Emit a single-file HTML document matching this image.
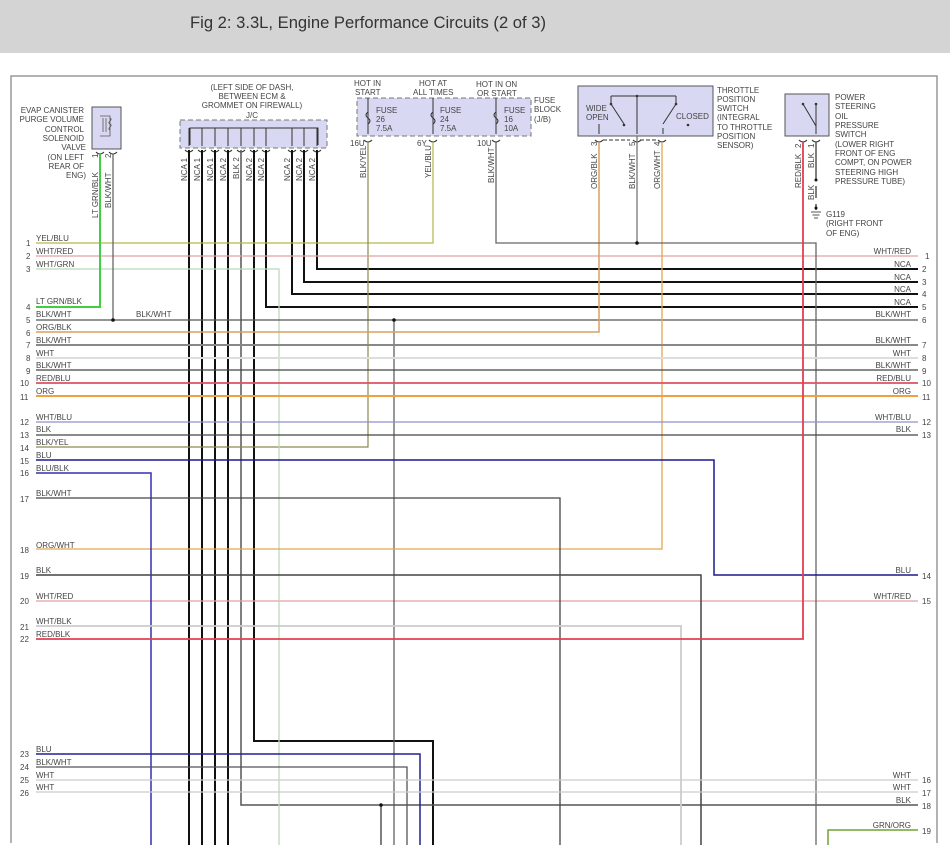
<!DOCTYPE html>
<html><head><meta charset="utf-8"><style>
html,body{margin:0;padding:0;background:#fff;}
.hd{position:absolute;left:0;top:0;width:950px;height:53px;background:#d4d4d4;}
.hd span{position:absolute;left:190px;top:13px;font:16.6px "Liberation Sans",sans-serif;color:#333;}
svg{position:absolute;left:0;top:0;}
text{font-family:"Liberation Sans",sans-serif;font-size:8px;fill:#444;}
</style></head><body>
<div class="hd"><span>Fig 2: 3.3L, Engine Performance Circuits (2 of 3)</span></div>
<svg width="950" height="862" viewBox="0 0 950 862">
<path d="M11 843 V76 H937 V843" fill="none" stroke="#999" stroke-width="1.5"/>

<rect x="92" y="107" width="29" height="42" fill="#d8d8f2" stroke="#555"/>
<path d="M100 116h10v20h-10 M103 118v14 M106 118v14 M110 118c4 2-4 4 0 6c4 2-4 4 0 6" fill="none" stroke="#555" stroke-width="0.8"/>
<rect x="180" y="120" width="147" height="28" fill="#d8d8f2" stroke="#777" stroke-dasharray="5,3"/>
<path d="M190 145V128H318V145" fill="none" stroke="#333"/>
<rect x="357" y="98" width="174" height="38" fill="#d8d8f2" stroke="#777" stroke-dasharray="5,3"/>
<rect x="578" y="86" width="135" height="50" fill="#d8d8f2" stroke="#555"/>
<rect x="785" y="94" width="44" height="42" fill="#d8d8f2" stroke="#555"/>

<g stroke="#333" stroke-width="1" fill="none">
<path d="M189 128V146M202 128V146M215 128V146M228 128V146M241 128V146M254 128V146M266 128V146M292 128V146M304 128V146M317 128V146"/>
<path d="M185 150q4 4 8 0M198 150q4 4 8 0M211 150q4 4 8 0M224 150q4 4 8 0M237 150q4 4 8 0M250 150q4 4 8 0M262 150q4 4 8 0M288 150q4 4 8 0M300 150q4 4 8 0M313 150q4 4 8 0"/>
<path d="M96 152q4 4 8 0M109 152q4 4 8 0M364 140q4 4 8 0M429 140q4 4 8 0M492 140q4 4 8 0M595 140q4 4 8 0M633 140q4 4 8 0M658 140q4 4 8 0M799 140q4 4 8 0M812 140q4 4 8 0"/>
<path d="M368 98V134M433 98V134M496 98V134" />
<path d="M368 112q-4 3 0 6q4 3 0 6M433 112q-4 3 0 6q4 3 0 6M496 112q-4 3 0 6q4 3 0 6" stroke-width="1"/>
<path d="M603 140H630M640 140H656" stroke-dasharray="4,2"/>
<path d="M611 96H676M637 96V134M611 96V104L624 124M676 96V104L663 124M599 124V134M663 128V134"/>
<path d="M803 104L816 126V134M816 104V134"/>
</g>
<g fill="#333"><circle cx="637" cy="96" r="1.3"/><circle cx="611" cy="104" r="1.3"/><circle cx="676" cy="104" r="1.3"/><circle cx="624" cy="125" r="1.3"/><circle cx="688" cy="125" r="1.3"/><circle cx="803" cy="104" r="1.3"/><circle cx="816" cy="104" r="1.3"/></g>

<g fill="none">
<g stroke="#111" stroke-width="2">
<path d="M189 150V845M202 150V845M215 150V845M228 150V845"/>
<path d="M317 150V269H918M304 150V282H918M292 150V294H918M266 150V307H918"/>
<path d="M254 150V741H433V845"/>
</g>
<path d="M241 150V805H918" stroke="#555" stroke-width="1.5"/>
<path d="M381 805V845" stroke="#555" stroke-width="1.5"/>
<path d="M36 243H433V142" stroke="#b8b84a" stroke-width="1.2"/>
<path d="M368 142V447H36" stroke="#8a8a50" stroke-width="1.2"/>
<path d="M36 256H918M36 601H918" stroke="#e0a0a0" stroke-width="1.2"/>
<path d="M36 269H279V845" stroke="#bcd8bc" stroke-width="1.3"/>
<path d="M36 307H100V154" stroke="#44cc44" stroke-width="2"/>
<path d="M113 154V320" stroke="#666" stroke-width="1.3"/>
<path d="M36 320H918M394 320V845" stroke="#555" stroke-width="1.2"/>
<path d="M36 332H599V142" stroke="#d9a060" stroke-width="1.5"/>
<path d="M662 142V549H36" stroke="#e0a850" stroke-width="1.3"/>
<path d="M496 142V243H816V845" stroke="#666" stroke-width="1.3"/>
<path d="M637 136V243" stroke="#777" stroke-width="1.3"/>
<path d="M36 345H918" stroke="#888" stroke-width="2"/>
<path d="M36 358H918" stroke="#ddd" stroke-width="2"/>
<path d="M36 370H918" stroke="#444" stroke-width="1.2"/>
<path d="M36 383H918" stroke="#e05060" stroke-width="1.8"/>
<path d="M36 396H918" stroke="#f0a040" stroke-width="2"/>
<path d="M36 422H918" stroke="#9090c8" stroke-width="1.2"/>
<path d="M36 435H918" stroke="#444" stroke-width="1.3"/>
<path d="M36 460H714V575H918" stroke="#1a1a90" stroke-width="1.5"/>
<path d="M36 473H151V845" stroke="#3030b0" stroke-width="1.5"/>
<path d="M36 498H560V845" stroke="#444" stroke-width="1.3"/>
<path d="M36 575H701V845" stroke="#444" stroke-width="1.5"/>
<path d="M36 626H681V845" stroke="#ccc" stroke-width="1.8"/>
<path d="M36 639H803V142" stroke="#e04050" stroke-width="1.8"/>
<path d="M36 754H420V845" stroke="#202090" stroke-width="1.5"/>
<path d="M36 767H407V845" stroke="#555" stroke-width="1.3"/>
<path d="M36 780H918M36 792H918" stroke="#ccc" stroke-width="1.3"/>
<path d="M828 845V830H918" stroke="#70a030" stroke-width="1.5"/>
<path d="M816 142V180M816 186V198M816 204V210" stroke="#555" stroke-width="1.5"/>
<path d="M811 212H821M812.5 215H819.5M814 218H818" stroke="#555"/>
</g>
<g fill="#111"><circle cx="113" cy="320" r="1.8"/><circle cx="394" cy="320" r="1.8"/><circle cx="637" cy="243" r="1.8"/><circle cx="381" cy="805" r="1.8"/><circle cx="816" cy="180" r="1.5"/><circle cx="816" cy="208" r="1.5"/></g>

<g>
<text x="84" y="113" text-anchor="end">EVAP CANISTER</text>
<text x="84" y="122" text-anchor="end">PURGE VOLUME</text>
<text x="84" y="132" text-anchor="end">CONTROL</text>
<text x="84" y="141" text-anchor="end">SOLENOID</text>
<text x="86" y="150" text-anchor="end">VALVE</text>
<text x="84" y="160" text-anchor="end">(ON LEFT</text>
<text x="84" y="169" text-anchor="end">REAR OF</text>
<text x="86" y="178" text-anchor="end">ENG)</text>
<text x="252" y="90" text-anchor="middle">(LEFT SIDE OF DASH,</text>
<text x="252" y="99" text-anchor="middle">BETWEEN ECM &amp;</text>
<text x="252" y="108" text-anchor="middle">GROMMET ON FIREWALL)</text>
<text x="252" y="118" text-anchor="middle">J/C</text>
<text x="354" y="86">HOT IN</text><text x="355" y="95">START</text>
<text x="419" y="86">HOT AT</text><text x="413" y="95">ALL TIMES</text>
<text x="476" y="87">HOT IN ON</text><text x="477" y="96">OR START</text>
<text x="376" y="113">FUSE</text><text x="376" y="122">26</text><text x="376" y="131">7.5A</text>
<text x="440" y="113">FUSE</text><text x="440" y="122">24</text><text x="440" y="131">7.5A</text>
<text x="504" y="113">FUSE</text><text x="504" y="122">16</text><text x="504" y="131">10A</text>
<text x="534" y="103">FUSE</text><text x="534" y="112">BLOCK</text><text x="534" y="122">(J/B)</text>
<text x="350" y="146">16U</text><text x="417" y="146">6Y</text><text x="477" y="146">10U</text>
<text x="586" y="111">WIDE</text><text x="586" y="120">OPEN</text><text x="676" y="119">CLOSED</text>
<text x="717" y="93">THROTTLE</text><text x="717" y="102">POSITION</text><text x="717" y="111">SWITCH</text><text x="717" y="120">(INTEGRAL</text><text x="717" y="130">TO THROTTLE</text><text x="717" y="139">POSITION</text><text x="717" y="148">SENSOR)</text>
<text x="835" y="100">POWER</text><text x="835" y="109">STEERING</text><text x="835" y="119">OIL</text><text x="835" y="128">PRESSURE</text><text x="835" y="137">SWITCH</text><text x="835" y="147">(LOWER RIGHT</text><text x="835" y="156">FRONT OF ENG</text><text x="835" y="165">COMPT, ON POWER</text><text x="835" y="175">STEERING HIGH</text><text x="835" y="184">PRESSURE TUBE)</text>
<text x="826" y="217">G119</text><text x="826" y="226">(RIGHT FRONT</text><text x="826" y="236">OF ENG)</text>
</g>
<g>
<text transform="translate(98,218) rotate(-90)">LT GRN/BLK</text>
<text transform="translate(111,208) rotate(-90)">BLK/WHT</text>
<text transform="translate(98,158) rotate(-90)">1</text>
<text transform="translate(111,158) rotate(-90)">2</text>
<text transform="translate(187,181) rotate(-90)">NCA 1</text>
<text transform="translate(200,181) rotate(-90)">NCA 1</text>
<text transform="translate(213,181) rotate(-90)">NCA 1</text>
<text transform="translate(226,181) rotate(-90)">NCA 2</text>
<text transform="translate(239,179) rotate(-90)">BLK 2</text>
<text transform="translate(252,181) rotate(-90)">NCA 2</text>
<text transform="translate(264,181) rotate(-90)">NCA 2</text>
<text transform="translate(290,181) rotate(-90)">NCA 2</text>
<text transform="translate(302,181) rotate(-90)">NCA 2</text>
<text transform="translate(315,181) rotate(-90)">NCA 2</text>
<text transform="translate(366,178) rotate(-90)">BLK/YEL</text>
<text transform="translate(431,178) rotate(-90)">YEL/BLU</text>
<text transform="translate(494,183) rotate(-90)">BLK/WHT</text>
<text transform="translate(597,189) rotate(-90)">ORG/BLK</text>
<text transform="translate(635,189) rotate(-90)">BLK/WHT</text>
<text transform="translate(660,189) rotate(-90)">ORG/WHT</text>
<text transform="translate(597,146) rotate(-90)">3</text>
<text transform="translate(635,146) rotate(-90)">5</text>
<text transform="translate(660,146) rotate(-90)">4</text>
<text transform="translate(801,188) rotate(-90)">RED/BLK</text>
<text transform="translate(814,168) rotate(-90)">BLK</text>
<text transform="translate(801,148) rotate(-90)">2</text>
<text transform="translate(814,148) rotate(-90)">1</text>
<text transform="translate(814,200) rotate(-90)">BLK</text>
</g>
<g>
<text x="36" y="241">YEL/BLU</text><text x="26" y="246">1</text>
<text x="36" y="254">WHT/RED</text><text x="26" y="259">2</text>
<text x="36" y="267">WHT/GRN</text><text x="26" y="272">3</text>
<text x="36" y="304">LT GRN/BLK</text><text x="26" y="310">4</text>
<text x="36" y="317">BLK/WHT</text><text x="26" y="323">5</text>
<text x="136" y="317">BLK/WHT</text>
<text x="36" y="330">ORG/BLK</text><text x="26" y="336">6</text>
<text x="36" y="343">BLK/WHT</text><text x="26" y="348">7</text>
<text x="36" y="356">WHT</text><text x="26" y="361">8</text>
<text x="36" y="368">BLK/WHT</text><text x="26" y="374">9</text>
<text x="36" y="381">RED/BLU</text><text x="20" y="386">10</text>
<text x="36" y="394">ORG</text><text x="20" y="400">11</text>
<text x="36" y="420">WHT/BLU</text><text x="20" y="425">12</text>
<text x="36" y="432">BLK</text><text x="20" y="438">13</text>
<text x="36" y="445">BLK/YEL</text><text x="20" y="451">14</text>
<text x="36" y="458">BLU</text><text x="20" y="464">15</text>
<text x="36" y="471">BLU/BLK</text><text x="20" y="476">16</text>
<text x="36" y="496">BLK/WHT</text><text x="20" y="502">17</text>
<text x="36" y="548">ORG/WHT</text><text x="20" y="553">18</text>
<text x="36" y="573">BLK</text><text x="20" y="579">19</text>
<text x="36" y="599">WHT/RED</text><text x="20" y="604">20</text>
<text x="36" y="624">WHT/BLK</text><text x="20" y="630">21</text>
<text x="36" y="637">RED/BLK</text><text x="20" y="642">22</text>
<text x="36" y="752">BLU</text><text x="20" y="757">23</text>
<text x="36" y="765">BLK/WHT</text><text x="20" y="770">24</text>
<text x="36" y="778">WHT</text><text x="20" y="783">25</text>
<text x="36" y="790">WHT</text><text x="20" y="796">26</text>
</g>
<g text-anchor="end">
<text x="911" y="254">WHT/RED</text><text x="925" y="259" text-anchor="start">1</text>
<text x="911" y="267">NCA</text><text x="922" y="272" text-anchor="start">2</text>
<text x="911" y="280">NCA</text><text x="922" y="285" text-anchor="start">3</text>
<text x="911" y="292">NCA</text><text x="922" y="297" text-anchor="start">4</text>
<text x="911" y="305">NCA</text><text x="922" y="310" text-anchor="start">5</text>
<text x="911" y="317">BLK/WHT</text><text x="922" y="323" text-anchor="start">6</text>
<text x="911" y="343">BLK/WHT</text><text x="922" y="348" text-anchor="start">7</text>
<text x="911" y="356">WHT</text><text x="922" y="361" text-anchor="start">8</text>
<text x="911" y="368">BLK/WHT</text><text x="922" y="374" text-anchor="start">9</text>
<text x="911" y="381">RED/BLU</text><text x="922" y="386" text-anchor="start">10</text>
<text x="911" y="394">ORG</text><text x="922" y="400" text-anchor="start">11</text>
<text x="911" y="420">WHT/BLU</text><text x="922" y="425" text-anchor="start">12</text>
<text x="911" y="432">BLK</text><text x="922" y="438" text-anchor="start">13</text>
<text x="911" y="573">BLU</text><text x="922" y="579" text-anchor="start">14</text>
<text x="911" y="599">WHT/RED</text><text x="922" y="604" text-anchor="start">15</text>
<text x="911" y="778">WHT</text><text x="922" y="783" text-anchor="start">16</text>
<text x="911" y="790">WHT</text><text x="922" y="796" text-anchor="start">17</text>
<text x="911" y="803">BLK</text><text x="922" y="809" text-anchor="start">18</text>
<text x="911" y="828">GRN/ORG</text><text x="922" y="834" text-anchor="start">19</text>
</g>
</svg>
</body></html>
